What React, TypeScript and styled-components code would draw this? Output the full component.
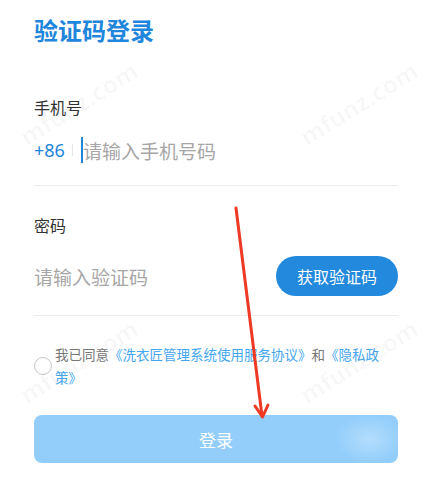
import React, { useState } from 'react'
import styled, { createGlobalStyle } from 'styled-components'

const GlobalStyle = createGlobalStyle`
    html, body {
        margin: 0;
        padding: 0;
        background: #ffffff;
    }
    body {
        font-family: "Noto Sans CJK SC", "Noto Sans", sans-serif;
    }
`

const App: React.FC = () => {
    const [agreed, setAgreed] = useState(false)

    return (
        <Page>
            <GlobalStyle />
            <Title>验证码登录</Title>

            <Field>
                <Label>手机号</Label>
                <InputRow>
                    <Prefix>+86</Prefix>
                    <PrefixDivider />
                    <Caret />
                    <Input placeholder="请输入手机号码" />
                </InputRow>
            </Field>

            <Field>
                <Label>密码</Label>
                <InputRow tall>
                    <Input placeholder="请输入验证码" />
                    <CodeButton>获取验证码</CodeButton>
                </InputRow>
            </Field>

            <Agreement>
                <Radio checked={agreed} onClick={() => setAgreed(!agreed)} />
                <AgreeText>
                    我已同意<Link>《洗衣匠管理系统使用服务协议》</Link>和<Link>《隐私政策》</Link>
                </AgreeText>
            </Agreement>

            <LoginButton>登录</LoginButton>

            <Watermark top={122} left={22}>mfunz.com</Watermark>
            <Watermark top={122} left={302}>mfunz.com</Watermark>
            <Watermark top={380} left={22}>mfunz.com</Watermark>
            <Watermark top={380} left={302}>mfunz.com</Watermark>

            <Arrow viewBox="0 0 433 480" width="433" height="480">
                <line x1="236" y1="208" x2="262" y2="416" stroke="#ee3a24" strokeWidth="3" strokeLinecap="round" />
                <polyline points="255,406 262.5,417 268,405" fill="none" stroke="#ee3a24" strokeWidth="3" strokeLinecap="round" strokeLinejoin="round" />
            </Arrow>
        </Page>
    )
}

const Page = styled.div`
    position: relative;
    width: 433px;
    height: 480px;
    box-sizing: border-box;
    padding: 12px 35px 0 34px;
    overflow: hidden;
`

const Title = styled.h1`
    margin: 0;
    font-size: 24px;
    line-height: 36px;
    font-weight: 700;
    color: #1e86dc;
`

const Field = styled.div`
    display: flex;
    flex-direction: column;
    padding-top: 47px;
    border-bottom: 1px solid #ececec;

    & + & {
        padding-top: 27px;
    }
`

const Label = styled.div`
    font-size: 16px;
    line-height: 24px;
    color: #333333;
`

const InputRow = styled.div<{ tall?: boolean }>`
    display: flex;
    align-items: center;
    height: ${props => props.tall ? 78 : 62}px;
    margin-bottom: ${props => props.tall ? 0 : 4}px;
`

const Prefix = styled.span`
    font-family: "Noto Sans", sans-serif;
    font-size: 18px;
    color: #1e86dc;
`

const PrefixDivider = styled.span`
    width: 1px;
    height: 12px;
    background: #e6e6e6;
    margin: 0 8px 0 7px;
`

const Caret = styled.span`
    width: 2px;
    height: 26px;
    background: #1e86dc;
`

const Input = styled.input`
    flex: 1;
    min-width: 0;
    border: none;
    outline: none;
    padding: 0;
    font-family: "Noto Sans CJK SC", sans-serif;
    font-size: 19px;
    color: #333;
    background: transparent;

    &::placeholder {
        color: #a6a6a6;
    }
`

const CodeButton = styled.button`
    width: 122px;
    height: 40px;
    border: none;
    border-radius: 20px;
    background: #2289dc;
    color: #ffffff;
    font-family: "Noto Sans CJK SC", sans-serif;
    font-size: 16px;
    cursor: pointer;
`

const Agreement = styled.div`
    display: flex;
    align-items: center;
    margin-top: 27px;
`

const Radio = styled.span<{ checked: boolean }>`
    flex: none;
    box-sizing: border-box;
    width: 18px;
    height: 18px;
    border-radius: 50%;
    border: 1px solid ${props => props.checked ? '#2289dc' : '#c8c8c8'};
    background: ${props => props.checked ? '#2289dc' : '#fff'};
    margin-right: 3px;
    cursor: pointer;
`

const AgreeText = styled.p`
    margin: 0;
    padding-right: 16px;
    font-size: 13.5px;
    line-height: 23px;
    color: #777777;
`

const Link = styled.span`
    color: #45a6f0;
`

const LoginButton = styled.button`
    display: block;
    width: 100%;
    height: 48px;
    margin-top: 26px;
    border: none;
    border-radius: 8px;
    background:
        radial-gradient(ellipse 34px 24px at 92% 50%, rgba(255, 255, 255, 0.3), rgba(255, 255, 255, 0) 100%),
        #93cefb;
    color: #ffffff;
    font-family: "Noto Sans CJK SC", sans-serif;
    font-size: 17px;
    cursor: pointer;
`

const Watermark = styled.div<{ top: number; left: number }>`
    position: absolute;
    top: ${props => props.top}px;
    left: ${props => props.left}px;
    transform: rotate(-32deg);
    transform-origin: left center;
    font-family: "Noto Sans", sans-serif;
    font-weight: 700;
    font-size: 24px;
    color: rgba(0, 0, 0, 0.03);
    pointer-events: none;
    white-space: nowrap;
`

const Arrow = styled.svg`
    position: absolute;
    top: 0;
    left: 0;
    pointer-events: none;
`

export default App
